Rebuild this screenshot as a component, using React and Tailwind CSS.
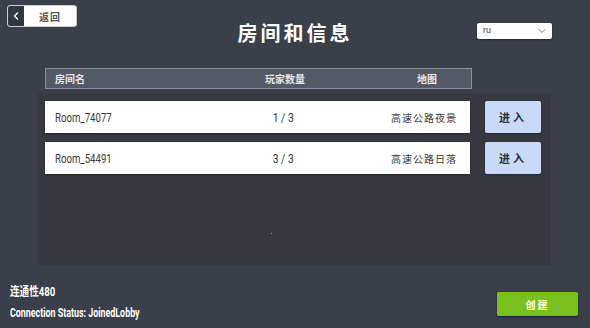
import { ChevronDown, ChevronLeft } from "lucide-react";

const latin = { fontFamily: 'Roboto, "Noto Sans CJK SC", sans-serif' };
const cjk = { fontFamily: '"Noto Sans CJK SC", "Noto Sans", sans-serif' };

const rooms = [
  { name: "Room_74077", players: "1 / 3", map: "高速公路夜景" },
  { name: "Room_54491", players: "3 / 3", map: "高速公路日落" },
];

function RoomRow({ room }) {
  return (
    <div className="flex gap-[15px]">
      <div className="grid h-[32px] w-[425px] grid-cols-[190px_96px_139px] items-center bg-white text-[#3a3a3a] shadow-[0_1px_2px_rgba(0,0,0,0.4)]">
        <span className="pl-[10px]" style={latin}>
          <span className="inline-block origin-left scale-x-[0.74] text-[13px]">{room.name}</span>
        </span>
        <span className="text-center" style={latin}>
          <span className="inline-block scale-x-[0.8] text-[13px]">{room.players}</span>
        </span>
        <span className="pr-[13px] text-right text-[10px] tracking-[1px]" style={cjk}>{room.map}</span>
      </div>
      <button
        type="button"
        className="h-[32px] w-[56px] rounded-[2px] bg-[#c9daf9] text-[11px] font-bold tracking-[3px] text-[#2a2e38] shadow-[0_1px_2px_rgba(0,0,0,0.4)]"
        style={cjk}
      >
        进入
      </button>
    </div>
  );
}

export default function App() {
  return (
    <div className="relative h-[328px] w-[590px] overflow-hidden bg-[#3b3f49]">
      <div className="grid h-[60px] grid-cols-[1fr_auto_1fr] items-start px-[7px]">
        <div>
          <button
            type="button"
            className="mt-[5px] flex h-[22px] w-[70px] overflow-hidden rounded-[3px] border border-[#c9ccd2] bg-white"
          >
            <span className="flex h-full w-[16px] items-center justify-center bg-[#333741] text-white">
              <ChevronLeft className="h-3 w-3" strokeWidth={3} />
            </span>
            <span className="flex flex-1 items-center justify-center text-[10px] font-bold tracking-[1px] text-[#555]" style={cjk}>
              返回
            </span>
          </button>
        </div>
        <h1 className="mt-[18px] text-[20px] font-bold leading-[30px] tracking-[3px] text-white" style={cjk}>
          房间和信息
        </h1>
        <div className="flex justify-end pr-[31px]">
          <div className="mt-[23px] flex h-[16px] w-[75px] items-center justify-between rounded-[2px] bg-white pl-[6px] pr-[4px] shadow-[0_1px_2px_rgba(0,0,0,0.4)]">
            <span className="text-[9px] text-[#444]" style={latin}>ru</span>
            <ChevronDown className="h-3 w-3 text-[#777]" strokeWidth={2} />
          </div>
        </div>
      </div>

      <div className="ml-[38px] w-[513px]">
        <div
          className="ml-[7px] mt-[8px] grid h-[21px] w-[427px] grid-cols-[190px_96px_141px] items-center border border-[#8a8f9b] bg-[#545966] text-[10px] font-bold text-[#e8e9ec]"
          style={cjk}
        >
          <span className="pl-[9px]">房间名</span>
          <span className="pl-[2px] text-center">玩家数量</span>
          <span className="pr-[36px] text-right">地图</span>
        </div>

        <div className="relative mt-[4px] flex h-[172px] flex-col gap-[9px] bg-[#363a40] px-[7px] pt-[8px]">
          {rooms.map((room) => (
            <RoomRow key={room.name} room={room} />
          ))}
          <span className="absolute left-[233px] top-[140px] h-[1px] w-[1px] bg-[#3fb8a8]" />
        </div>
      </div>

      <div className="mt-[19px] flex items-start justify-between pl-[10px] pr-[12px]">
        <div className="flex flex-col gap-[7px] text-[12px] font-bold leading-[14px] text-white" style={latin}>
          <span className="inline-block origin-left scale-x-[0.8] whitespace-nowrap">
            <span style={cjk}>连通性</span>480
          </span>
          <span className="inline-block origin-left scale-x-[0.74] whitespace-nowrap">Connection Status: JoinedLobby</span>
        </div>
        <button
          type="button"
          className="mt-[8px] h-[24px] w-[81px] rounded-[2px] bg-[#78c11c] text-[10px] font-bold tracking-[2px] text-white shadow-[0_1px_2px_rgba(0,0,0,0.5)]"
          style={cjk}
        >
          创建
        </button>
      </div>
    </div>
  );
}
